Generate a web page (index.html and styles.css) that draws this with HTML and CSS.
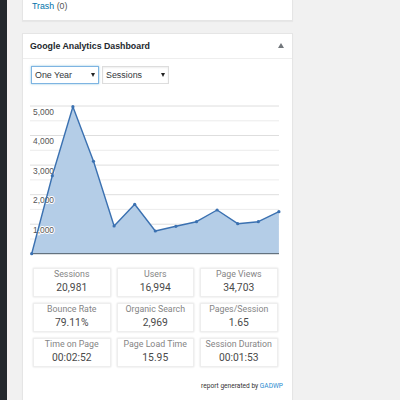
FILE: index.html
```html
<!DOCTYPE html>
<html>
<head>
<meta charset="utf-8">
<link rel="stylesheet" href="styles.css">
</head>
<body>
<div class="sidebar"></div>
<div class="main">
  <div class="card top-card">
    <a class="link" href="#">Trash</a> <span class="count">(0)</span>
  </div>
  <div class="card widget">
    <div class="widget-head">
      <span class="widget-title">Google Analytics Dashboard</span>
      <svg class="toggle" width="6" height="5" viewBox="0 0 6 5"><polygon points="3,0 6,5 0,5" fill="#72777c"/></svg>
    </div>
    <div class="widget-body">
      <div class="controls">
        <div class="select focused"><span>One Year</span><svg class="arrow" width="4" height="4" viewBox="0 0 4 4"><polygon points="0,0 4,0 2,4" fill="#222"/></svg></div>
        <div class="select wide"><span>Sessions</span><svg class="arrow" width="4" height="4" viewBox="0 0 4 4"><polygon points="0,0 4,0 2,4" fill="#222"/></svg></div>
      </div>
      <svg class="chart" width="270" height="178" viewBox="0 0 270 178">
        <g stroke-width="1">
          <line x1="7" y1="149" x2="256" y2="149" stroke="#ececec"/>
          <line x1="7" y1="134.2" x2="256" y2="134.2" stroke="#dedede"/>
          <line x1="7" y1="119.4" x2="256" y2="119.4" stroke="#ececec"/>
          <line x1="7" y1="104.7" x2="256" y2="104.7" stroke="#dedede"/>
          <line x1="7" y1="89.9" x2="256" y2="89.9" stroke="#ececec"/>
          <line x1="7" y1="75.1" x2="256" y2="75.1" stroke="#dedede"/>
          <line x1="7" y1="60.3" x2="256" y2="60.3" stroke="#ececec"/>
          <line x1="7" y1="45.5" x2="256" y2="45.5" stroke="#dedede"/>
          <line x1="7" y1="30.8" x2="256" y2="30.8" stroke="#ececec"/>
          <line x1="7" y1="16" x2="256" y2="16" stroke="#dedede"/>
        </g>
        <polygon points="8.7,163.7 29.3,85.7 49.9,16.7 70.5,71.3 91.1,136 111.7,114.3 132.3,141 152.9,136.3 173.5,131.7 194.1,120 214.7,133.7 235.3,131.7 255.9,121.7 255.9,163.7" fill="#b4cde7"/>
        <g class="axis" font-size="8.4" fill="#555">
          <text x="10" y="24.6">5,000</text>
          <text x="10" y="54.2">4,000</text>
          <text x="10" y="83.7">3,000</text>
          <text x="10" y="113.3">2,000</text>
          <text x="10" y="142.8">1,000</text>
        </g>
        <line x1="8" y1="163.7" x2="256" y2="163.7" stroke="#4d5a66" stroke-width="1"/>
        <polyline points="8.7,163.7 29.3,85.7 49.9,16.7 70.5,71.3 91.1,136 111.7,114.3 132.3,141 152.9,136.3 173.5,131.7 194.1,120 214.7,133.7 235.3,131.7 255.9,121.7" fill="none" stroke="#3b71b1" stroke-width="1.4" stroke-linejoin="round"/>
        <g fill="#3b71b1">
          <circle cx="8.7" cy="163.7" r="1.6"/>
          <circle cx="29.3" cy="85.7" r="1.6"/>
          <circle cx="49.9" cy="16.7" r="1.6"/>
          <circle cx="70.5" cy="71.3" r="1.6"/>
          <circle cx="91.1" cy="136" r="1.6"/>
          <circle cx="111.7" cy="114.3" r="1.6"/>
          <circle cx="132.3" cy="141" r="1.6"/>
          <circle cx="152.9" cy="136.3" r="1.6"/>
          <circle cx="173.5" cy="131.7" r="1.6"/>
          <circle cx="194.1" cy="120" r="1.6"/>
          <circle cx="214.7" cy="133.7" r="1.6"/>
          <circle cx="235.3" cy="131.7" r="1.6"/>
          <circle cx="255.9" cy="121.7" r="1.6"/>
        </g>
      </svg>
      <div class="stats">
        <div class="stat"><div class="stat-label">Sessions</div><div class="stat-value">20,981</div></div>
        <div class="stat"><div class="stat-label">Users</div><div class="stat-value">16,994</div></div>
        <div class="stat"><div class="stat-label">Page Views</div><div class="stat-value">34,703</div></div>
        <div class="stat"><div class="stat-label">Bounce Rate</div><div class="stat-value">79.11%</div></div>
        <div class="stat"><div class="stat-label">Organic Search</div><div class="stat-value">2,969</div></div>
        <div class="stat"><div class="stat-label">Pages/Session</div><div class="stat-value">1.65</div></div>
        <div class="stat"><div class="stat-label">Time on Page</div><div class="stat-value">00:02:52</div></div>
        <div class="stat"><div class="stat-label">Page Load Time</div><div class="stat-value">15.95</div></div>
        <div class="stat"><div class="stat-label">Session Duration</div><div class="stat-value">00:01:53</div></div>
      </div>
      <div class="footer">report generated by <a class="link" href="#">GADWP</a></div>
    </div>
  </div>
</div>
</body>
</html>
```
FILE: styles.css
```css
* { box-sizing: border-box; }
html, body { margin: 0; padding: 0; }
body {
  display: flex;
  width: 400px;
  height: 400px;
  overflow: hidden;
  background: #f1f1f1;
  font-family: "Liberation Sans", Arial, sans-serif;
  color: #444;
}
.sidebar {
  width: 7px;
  flex: none;
  background: #23282d;
}
.main {
  padding-left: 15px;
  width: 286px;
  flex: none;
}
.card {
  width: 271px;
  background: #fff;
  border: 1px solid #e5e5e5;
  box-shadow: 0 1px 1px rgba(0,0,0,0.04);
}
.top-card {
  height: 21px;
  border-top: none;
  padding-left: 9px;
  font-size: 8.8px;
  line-height: 12px;
}
.link { color: #0073aa; text-decoration: none; }
.count { color: #555; }
.widget { margin-top: 12px; height: 380px; }
.widget-head {
  height: 25px;
  border-bottom: 1px solid #eee;
  display: flex;
  align-items: center;
  padding: 0 7px 0 7px;
}
.widget-title {
  font-weight: bold;
  font-size: 8.8px;
  color: #23282d;
  flex: 1;
}
.toggle { margin-right: 1px; margin-top: -1px; }
.widget-body { padding-top: 7px; }
.controls {
  display: flex;
  gap: 3px;
  padding-left: 8px;
}
.select {
  width: 68px;
  height: 18px;
  border: 1px solid #ddd;
  box-shadow: inset 0 1px 2px rgba(0,0,0,0.07);
  display: flex;
  align-items: center;
  padding-left: 3px;
  padding-right: 3px;
  font-size: 8.9px;
  color: #32373c;
}
.select.wide { width: 67px; }
.select.focused {
  border-color: #7eb4e2;
  box-shadow: 0 0 2px rgba(30,140,190,0.5);
}
.select span { flex: 1; }
.chart { display: block; margin-top: 6px; }
.axis { font-family: "Liberation Sans", Arial, sans-serif; stroke: #fff; stroke-width: 2px; paint-order: stroke; }
.stats {
  display: grid;
  grid-template-columns: repeat(3, 77.5px);
  grid-auto-rows: 29px;
  gap: 6px;
  margin-left: 10px;
}
.stat {
  border: 1px solid #eeeeee;
  box-shadow: 0 0 2px rgba(0,0,0,0.14);
  text-align: center;
  font-family: Roboto, "Liberation Sans", sans-serif;
}
.stat-label {
  font-size: 8.8px;
  line-height: 11px;
  color: #858585;
}
.stat-value {
  font-size: 10.3px;
  line-height: 14px;
  color: #4a4a4a;
  margin-top: 1px;
}
.footer {
  margin-top: 13px;
  text-align: right;
  padding-right: 9px;
  font-family: Roboto, "Liberation Sans", sans-serif;
  font-size: 6.6px;
  line-height: 12px;
  color: #333;
}
.footer .link { color: #2a8bd0; }
```
